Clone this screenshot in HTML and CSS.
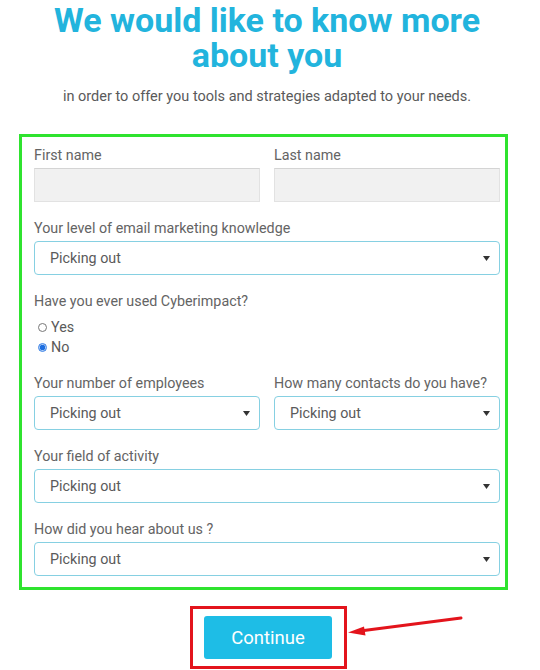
FILE: index.html
```html
<!DOCTYPE html>
<html lang="en">
<head>
<meta charset="utf-8">
<title>We would like to know more about you</title>
<link rel="stylesheet" href="styles.css">
</head>
<body>
<div class="page">
  <header class="intro">
    <h1 class="title">We would like to know more<br>about you</h1>
    <p class="subtitle">in order to offer you tools and strategies adapted to your needs.</p>
  </header>

  <form class="form-box">
    <div class="row two">
      <div class="field">
        <label class="label">First name</label>
        <div class="input"></div>
      </div>
      <div class="field">
        <label class="label">Last name</label>
        <div class="input"></div>
      </div>
    </div>

    <div class="field">
      <label class="label">Your level of email marketing knowledge</label>
      <div class="select"><span>Picking out</span><svg class="caret" width="7" height="5" viewBox="0 0 7 5"><path d="M0 0H7L3.5 5Z"/></svg></div>
    </div>

    <div class="field">
      <label class="label">Have you ever used Cyberimpact?</label>
      <div class="radios">
        <div class="radio"><span class="dot"></span>Yes</div>
        <div class="radio"><span class="dot checked"></span>No</div>
      </div>
    </div>

    <div class="row two">
      <div class="field">
        <label class="label">Your number of employees</label>
        <div class="select"><span>Picking out</span><svg class="caret" width="7" height="5" viewBox="0 0 7 5"><path d="M0 0H7L3.5 5Z"/></svg></div>
      </div>
      <div class="field">
        <label class="label">How many contacts do you have?</label>
        <div class="select"><span>Picking out</span><svg class="caret" width="7" height="5" viewBox="0 0 7 5"><path d="M0 0H7L3.5 5Z"/></svg></div>
      </div>
    </div>

    <div class="field">
      <label class="label">Your field of activity</label>
      <div class="select"><span>Picking out</span><svg class="caret" width="7" height="5" viewBox="0 0 7 5"><path d="M0 0H7L3.5 5Z"/></svg></div>
    </div>

    <div class="field">
      <label class="label">How did you hear about us ?</label>
      <div class="select"><span>Picking out</span><svg class="caret" width="7" height="5" viewBox="0 0 7 5"><path d="M0 0H7L3.5 5Z"/></svg></div>
    </div>
  </form>

  <div class="actions">
    <div class="highlight">
      <button class="continue" type="button">Continue</button>
    </div>
  </div>
</div>
<svg class="pointer" width="130" height="30" viewBox="0 0 130 30">
  <line x1="121" y1="8" x2="20" y2="21" stroke="#e3141c" stroke-width="3" stroke-linecap="round"/>
  <path d="M8 22.5L24 16.5L25.5 25.5Z" fill="#e3141c"/>
</svg>
</body>
</html>
```

FILE: styles.css
```css
* { box-sizing: border-box; }

html, body {
  margin: 0;
  padding: 0;
  background: #ffffff;
}

body {
  position: relative;
  width: 540px;
  height: 670px;
  overflow: hidden;
  font-family: Roboto, "Liberation Sans", sans-serif;
  color: #5c5c5c;
}

.page {
  width: 496px;
  margin-left: 19px;
}

.intro {
  text-align: center;
  padding-top: 3px;
}

.title {
  margin: 0;
  font-size: 34px;
  line-height: 35px;
  font-weight: 700;
  color: #22b4dd;
}

.subtitle {
  margin: 14px 0 0;
  font-size: 14.5px;
  line-height: 19px;
  color: #5a5a5a;
}

.form-box {
  margin-top: 28px;
  width: 489px;
  border: 3px solid #2fe32f;
  padding: 9px 5px 11px 12px;
  display: flex;
  flex-direction: column;
  gap: 17px;
}

.row.two {
  display: grid;
  grid-template-columns: 1fr 1fr;
  column-gap: 14px;
}

.field {
  display: flex;
  flex-direction: column;
}

.label {
  font-size: 14.3px;
  line-height: 18px;
  color: #646464;
  margin-bottom: 4px;
}

.input {
  height: 34px;
  background: #f1f1f1;
  border: 1px solid #e2e2e2;
  border-top-color: #d4d4d4;
}

.select {
  height: 34px;
  border: 1px solid #86d0e2;
  border-radius: 4px;
  background: #fff;
  display: flex;
  align-items: center;
  justify-content: space-between;
  padding: 0 9px 0 15px;
  font-size: 14.3px;
  color: #5a5a5a;
}

.caret { fill: #333; }

.radios {
  margin-top: 3px;
  display: flex;
  flex-direction: column;
}

.radio {
  display: flex;
  align-items: center;
  font-size: 14.3px;
  line-height: 20px;
  color: #5a5a5a;
  padding-left: 4px;
}

.dot {
  width: 9px;
  height: 9px;
  border-radius: 50%;
  border: 1px solid #777;
  margin-right: 4px;
  background: #fff;
}

.dot.checked {
  border-color: #3b82e6;
  background: radial-gradient(circle, #1f6fe0 0 2.5px, #aecdf6 3px);
}

.actions {
  display: flex;
  justify-content: center;
  margin-top: 16px;
  padding-left: 3px;
}

.highlight {
  border: 3px solid #e3141c;
  padding: 7px 12px 7px 11px;
}

.continue {
  display: block;
  width: 128px;
  height: 43px;
  border: 0;
  border-radius: 3px;
  background: #1ebde6;
  color: #ffffff;
  font-family: Roboto, "Liberation Sans", sans-serif;
  font-size: 18.5px;
  cursor: pointer;
}

.pointer {
  position: absolute;
  left: 340px;
  top: 610px;
}
```
